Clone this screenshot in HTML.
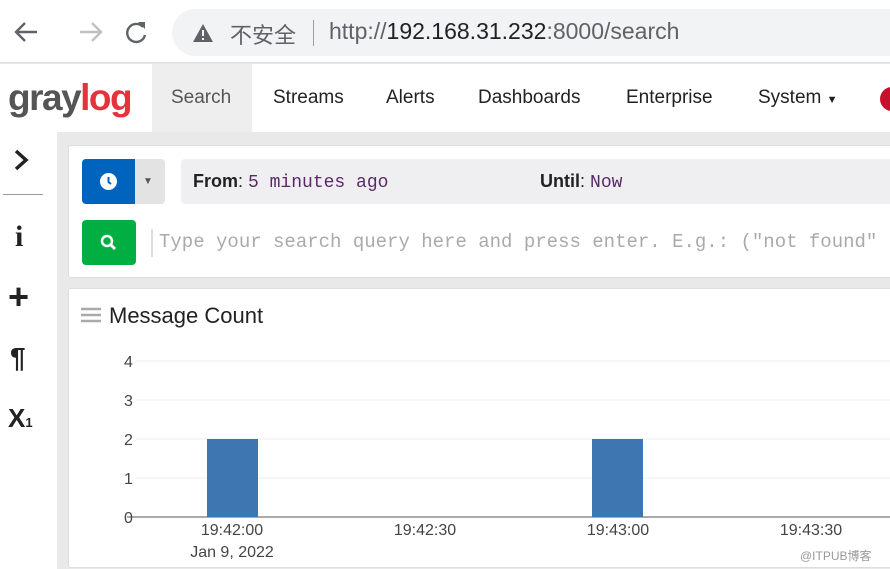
<!DOCTYPE html>
<html><head><meta charset="utf-8"><style>
*{margin:0;padding:0;box-sizing:border-box}
body{width:890px;height:569px;overflow:hidden;background:#e9e9e9;font-family:"Liberation Sans","Noto Sans CJK SC",sans-serif;position:relative}
.a{position:absolute}
.mono{font-family:"Liberation Mono",monospace}
</style></head><body>
<div class="a" style="left:0;top:0;width:890px;height:63px;background:#fff;border-bottom:1px solid #dadce0"></div>
<svg class="a" style="left:10px;top:18px" width="140" height="30" viewBox="0 0 140 30">
<path d="M27 14H7M15 5L6 14L15 23" stroke="#5f6368" stroke-width="2.4" fill="none"/>
<path d="M70 14H90M82 5L91 14L82 23" stroke="#bdc1c6" stroke-width="2.4" fill="none"/>
<path d="M133 9A9 9 0 1 0 135 17" stroke="#5f6368" stroke-width="2.4" fill="none"/><path d="M128 4L135 4L135 11Z" fill="#5f6368"/>
</svg>
<div class="a" style="left:172px;top:9px;width:740px;height:47px;border-radius:24px;background:#f1f3f4"></div>
<svg class="a" style="left:192px;top:23px" width="22" height="20"><path d="M11 1L21 19H1Z" fill="#5f6368"/><rect x="10" y="7" width="2" height="6" fill="#f1f3f4"/><rect x="10" y="15" width="2" height="2" fill="#f1f3f4"/></svg>
<div class="a" style="left:230px;top:18px;font-size:22px;color:#5f6368">不安全</div>
<div class="a" style="left:313px;top:20px;width:1px;height:26px;background:#9aa0a6"></div>
<div class="a" style="left:329px;top:18px;font-size:23px;color:#5f6368">http://<span style="color:#202124">192.168.31.232</span>:8000/search</div>

<div class="a" style="left:0;top:64px;width:890px;height:68px;background:#fff"></div>
<div class="a" style="left:152px;top:64px;width:100px;height:68px;background:#eee"></div>
<div class="a" style="left:8px;top:77px;font-size:37px;font-weight:bold;letter-spacing:-1.5px;color:#555">gray<span style="color:#e8323b">log</span></div>
<div class="a" style="left:171px;top:87px;font-size:19px;color:#555">Search</div>
<div class="a" style="left:273px;top:87px;font-size:19px;color:#222">Streams</div>
<div class="a" style="left:386px;top:87px;font-size:19px;color:#222">Alerts</div>
<div class="a" style="left:478px;top:87px;font-size:19px;color:#222">Dashboards</div>
<div class="a" style="left:626px;top:87px;font-size:19px;color:#222">Enterprise</div>
<div class="a" style="left:758px;top:87px;font-size:19px;color:#222">System <span style="font-size:11px">▼</span></div>
<div class="a" style="left:880px;top:87px;width:24px;height:24px;border-radius:50%;background:#c8102e"></div>

<div class="a" style="left:0;top:132px;width:57px;height:437px;background:#fff"></div>
<svg class="a" style="left:12px;top:149px" width="20" height="22"><path d="M4 2L14 11L4 20" stroke="#222" stroke-width="3.5" fill="none"/></svg>
<div class="a" style="left:3px;top:194px;width:40px;height:1px;background:#999"></div>
<div class="a" style="left:15px;top:220px;font-size:30px;font-weight:bold;font-family:'Liberation Serif',serif;color:#222">i</div>
<div class="a" style="left:8px;top:280px;font-size:36px;font-weight:bold;color:#222;line-height:34px">+</div>
<div class="a" style="left:10px;top:342px;font-size:28px;font-weight:bold;color:#222">¶</div>
<div class="a" style="left:8px;top:403px;font-size:26px;font-weight:bold;color:#222">X<span style="font-size:13px">1</span></div>

<div class="a" style="left:68px;top:145px;width:830px;height:133px;background:#fff;border:1px solid #ddd;border-radius:3px"></div>
<div class="a" style="left:82px;top:159px;width:53px;height:45px;background:#0063be;border-radius:4px 0 0 4px"></div>
<div class="a" style="left:100px;top:173px;width:17px;height:17px;border-radius:50%;background:#fff"></div>
<svg class="a" style="left:100px;top:173px" width="17" height="17"><path d="M8.5 4V9L11 11" stroke="#0063be" stroke-width="2" fill="none"/></svg>
<div class="a" style="left:135px;top:159px;width:30px;height:45px;background:#e3e3e3;border-radius:0 4px 4px 0"></div>
<div class="a" style="left:143px;top:176px;font-size:10px;color:#555">▼</div>
<div class="a" style="left:181px;top:159px;width:720px;height:45px;background:#efeff2;border-radius:4px"></div>
<div class="a" style="left:193px;top:171px;font-size:18px;color:#222"><b>From</b>: <span class="mono" style="color:#5a2a68">5 minutes ago</span></div>
<div class="a" style="left:540px;top:171px;font-size:18px;color:#222"><b>Until</b>: <span class="mono" style="color:#5a2a68">Now</span></div>
<div class="a" style="left:82px;top:220px;width:54px;height:45px;background:#00ae42;border-radius:4px"></div>
<svg class="a" style="left:99px;top:233px" width="20" height="20"><circle cx="8" cy="8" r="5" stroke="#fff" stroke-width="2.5" fill="none"/><path d="M12 12L16 16" stroke="#fff" stroke-width="3"/></svg>
<div class="a" style="left:151px;top:229px;width:2px;height:28px;background:#ddd"></div>
<div class="a mono" style="left:159px;top:231px;font-size:19px;color:#aaa;white-space:nowrap">Type your search query here and press enter. E.g.: ("not found"</div>

<div class="a" style="left:68px;top:288px;width:830px;height:280px;background:#fff;border:1px solid #ddd;border-radius:3px"></div>
<svg class="a" style="left:81px;top:307px" width="20" height="18"><path d="M0 2H20M0 8H20M0 14H20" stroke="#aaa" stroke-width="2.5"/></svg>
<div class="a" style="left:109px;top:303px;font-size:22px;color:#222">Message Count</div>
<svg class="a" style="left:0;top:340px" width="890" height="229" font-family="Liberation Sans,sans-serif" font-size="16" fill="#444">
<g stroke="#eee"><path d="M136 21H890M136 60H890M136 99H890M136 138H890"/></g>
<text x="124" y="27">4</text><text x="124" y="66">3</text><text x="124" y="105">2</text><text x="124" y="144">1</text><text x="124" y="183">0</text>
<path d="M127 177H890" stroke="#555"/>
<rect x="207" y="99" width="51" height="78" fill="#3d76b0"/>
<rect x="592" y="99" width="51" height="78" fill="#3d76b0"/>
<g text-anchor="middle"><text x="232" y="195">19:42:00</text><text x="232" y="217">Jan 9, 2022</text><text x="425" y="195">19:42:30</text><text x="618" y="195">19:43:00</text><text x="811" y="195">19:43:30</text></g>
<text x="800" y="220" font-size="12" fill="#999">@ITPUB博客</text>
</svg>
</body></html>
